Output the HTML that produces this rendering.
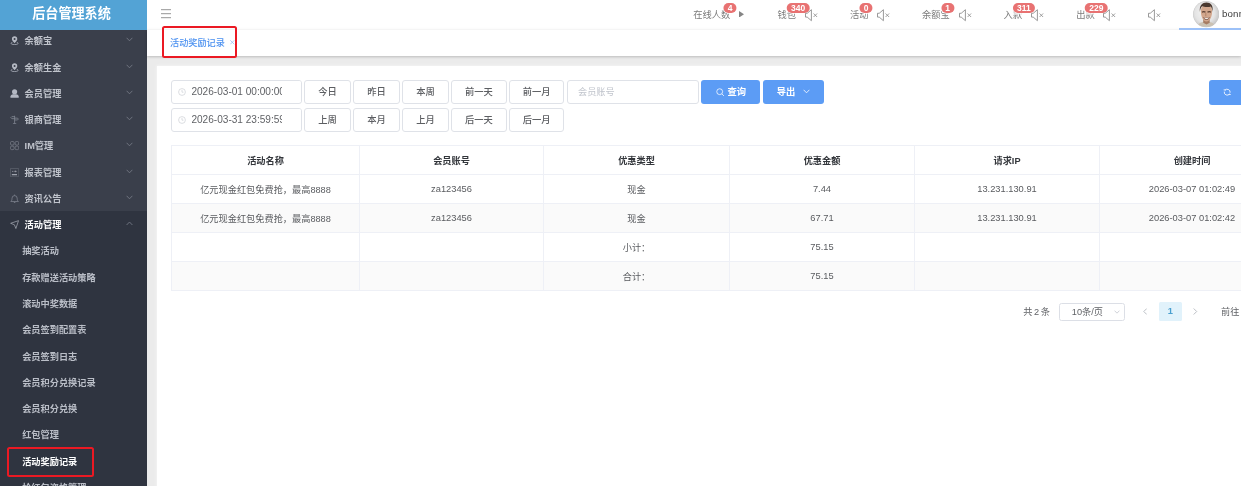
<!DOCTYPE html>
<html lang="zh-CN">
<head>
<meta charset="utf-8">
<title>后台管理系统</title>
<style>
*{box-sizing:border-box;margin:0;padding:0}
html,body{width:1241px;height:486px;overflow:hidden;background:#fff}
body{font-family:"Liberation Sans","Noto Sans CJK SC",sans-serif;font-size:9.3px;color:#606266;position:relative;-webkit-font-smoothing:antialiased}
#app{position:absolute;left:0;top:0;width:1241px;height:486px;overflow:hidden;will-change:transform}
.abs{position:absolute}
/* sidebar */
#side{position:absolute;left:0;top:0;width:147px;height:486px;background:#3a3f4b;overflow:hidden}
#logo{position:absolute;left:0;top:0;width:147px;height:29.5px;background:#53a3d5;color:#fff;font-weight:700;font-size:13.1px;text-align:center;line-height:27px;z-index:3;padding-right:4px}
#menu{position:absolute;left:0;top:27.15px;width:147px}
.mi{height:26.29px;line-height:27.2px;padding-top:1.1px;position:relative;color:#c0c4cc;font-weight:700;font-size:9.2px;padding-left:24.6px;white-space:nowrap}
.mi svg.ic{position:absolute;left:9.5px;top:9.1px;width:9.2px;height:9.2px}
.mi svg.ar{position:absolute;left:125.8px;top:10.2px;width:7px;height:5px}
.mi.open{background:#2f3440;color:#fff}
.sub{background:#2f3440}
.si{height:26.29px;line-height:27.2px;padding-top:1.1px;color:#babec7;font-weight:700;font-size:9.2px;padding-left:22.2px;white-space:nowrap}
.si.act{color:#fff}
/* header */
#hdr{position:absolute;left:147px;top:0;width:1094px;height:30px;background:#fff}
.ht{position:absolute;top:8.5px;line-height:13px;font-size:9.3px;color:#7c7c7c;white-space:nowrap}
.bd{position:absolute;top:3.2px;height:9.9px;line-height:10.9px;border-radius:6px;background:#e87272;box-shadow:0 0 0 0.7px #fff;color:#fff;font-size:8.5px;font-weight:700;text-align:center;padding:0 4.2px;min-width:12.4px;transform:translateX(-50%)}
.spk{position:absolute;top:9.2px;width:13px;height:12.4px}
/* tabs */
#tabs{position:absolute;left:147px;top:29.5px;width:1094px;height:26.5px;background:#fff;box-shadow:0 1px 2.5px rgba(0,0,0,.2),0 -1px 3px rgba(0,0,0,.035);z-index:2}
#main{position:absolute;left:147px;top:55.5px;width:1094px;height:431px;background:#ebebeb}
#card{position:absolute;left:10px;top:10.2px;width:1100px;height:430px;background:#fff;box-shadow:0 0 3px 1.5px rgba(255,255,255,.55)}
.inp{position:absolute;height:24px;border:1px solid #dfe2e8;border-radius:3px;background:#fff;color:#606266;font-size:10.08px;line-height:22px;white-space:nowrap;overflow:hidden}
.btn{position:absolute;height:24px;border:1px solid #dfe2e8;border-radius:3px;background:#fff;color:#5c5e62;font-size:9.3px;font-weight:500;line-height:22px;text-align:center;white-space:nowrap}
.pbtn{position:absolute;height:24.3px;border-radius:3px;background:#5c9cf5;color:#fff;font-size:9.3px;font-weight:700;line-height:24.3px;text-align:center;white-space:nowrap}
table{position:absolute;left:171px;top:145px;border-collapse:separate;border-spacing:0;table-layout:fixed;width:1114px;border-left:1px solid #eef0f6;border-top:1px solid #eef0f6}
td,th{border-right:1px solid #eef0f6;border-bottom:1px solid #eef0f6;height:29px;line-height:14px;text-align:center;font-size:9.2px;color:#595b5f;font-weight:400;padding:1px 0 0 0;white-space:nowrap}
th{color:#33363b;font-weight:700}
tr.s td{background:#fafafa}
td.n{padding:0 0 1px 0;font-size:9.3px}
</style>
</head>
<body>
<div id="app">
<div id="side">
  <div id="logo">后台管理系统</div>
  <div id="menu">
    <div class="mi"><svg class="ic" viewBox="0 0 10 10"><path fill-rule="evenodd" d="M5 0.300a2.900 2.900 0 0 1 2.900 2.900c0 1.900-2.900 4.600-2.900 4.600S2.100 5.100 2.100 3.200A2.900 2.900 0 0 1 5 0.300zM5 2.100a1.100 1.100 0 1 0 0 2.200a1.100 1.100 0 0 0 0-2.200z" fill="#b6bac4"/><path d="M2.600 6.900C0.200 7.500 0.600 9.300 5 9.300s4.800-1.800 2.400-2.400" fill="none" stroke="#b6bac4" stroke-width="0.800"/></svg>余额宝<svg class="ar" viewBox="0 0 7 5"><path d="M0.600 0.800L3.500 3.800L6.400 0.800" fill="none" stroke="#777c88" stroke-width="0.850"/></svg></div>
    <div class="mi"><svg class="ic" viewBox="0 0 10 10"><path fill-rule="evenodd" d="M5 0.300a2.900 2.900 0 0 1 2.900 2.900c0 1.900-2.900 4.600-2.900 4.600S2.100 5.100 2.100 3.200A2.900 2.900 0 0 1 5 0.300zM5 2.100a1.100 1.100 0 1 0 0 2.200a1.100 1.100 0 0 0 0-2.200z" fill="#b6bac4"/><path d="M2.600 6.900C0.200 7.500 0.600 9.300 5 9.300s4.800-1.800 2.400-2.400" fill="none" stroke="#b6bac4" stroke-width="0.800"/></svg>余额生金<svg class="ar" viewBox="0 0 7 5"><path d="M0.600 0.800L3.500 3.800L6.400 0.800" fill="none" stroke="#777c88" stroke-width="0.850"/></svg></div>
    <div class="mi"><svg class="ic" viewBox="0 0 10 10"><circle cx="5" cy="3" r="2.800" fill="#b3b8c3"/><path d="M0.500 9.600V8.200c0-1.600 1.300-2.600 2.800-2.600h3.400c1.500 0 2.800 1 2.800 2.600v1.400z" fill="#b3b8c3"/></svg>会员管理<svg class="ar" viewBox="0 0 7 5"><path d="M0.600 0.800L3.500 3.800L6.400 0.800" fill="none" stroke="#777c88" stroke-width="0.850"/></svg></div>
    <div class="mi"><svg class="ic" viewBox="0 0 10 10"><path d="M5 0.800v8.400M3.200 9.400h3.600M5 1.800H2L0.900 2.900L2 4h3M5 3.400h3.200l1 1l-1 1H5" fill="none" stroke="#9297a3" stroke-width="0.700" stroke-linejoin="round"/></svg>银商管理<svg class="ar" viewBox="0 0 7 5"><path d="M0.600 0.800L3.500 3.800L6.400 0.800" fill="none" stroke="#777c88" stroke-width="0.850"/></svg></div>
    <div class="mi"><svg class="ic" viewBox="0 0 10 10"><g fill="none" stroke="#80858f" stroke-width="0.750"><rect x="0.600" y="0.600" width="3.800" height="3.800" rx="1.100"/><rect x="5.600" y="0.600" width="3.800" height="3.800" rx="1.100"/><rect x="0.600" y="5.600" width="3.800" height="3.800" rx="1.100"/><rect x="5.600" y="5.600" width="3.800" height="3.800" rx="1.100"/></g></svg>IM管理<svg class="ar" viewBox="0 0 7 5"><path d="M0.600 0.800L3.500 3.800L6.400 0.800" fill="none" stroke="#777c88" stroke-width="0.850"/></svg></div>
    <div class="mi"><svg class="ic" viewBox="0 0 10 10"><rect x="0.400" y="0.400" width="9.200" height="9.200" rx="0.600" fill="none" stroke="#6c717d" stroke-width="0.650"/><path d="M2 7.300h5.600" stroke="#b9bdc7" stroke-width="1.100"/><path d="M2.200 3.700h1.500M4.700 3.700h2.600M5.800 2.800v1.800" stroke="#a4a8b2" stroke-width="0.750"/></svg>报表管理<svg class="ar" viewBox="0 0 7 5"><path d="M0.600 0.800L3.500 3.800L6.400 0.800" fill="none" stroke="#777c88" stroke-width="0.850"/></svg></div>
    <div class="mi"><svg class="ic" viewBox="0 0 10 10"><path d="M0.900 8.200c1.100-1 1.300-2 1.300-3.600a2.800 2.800 0 0 1 5.600 0c0 1.600 0.200 2.600 1.300 3.600zM5 0.600v1.100M4.200 9.300h1.600" fill="none" stroke="#8d929e" stroke-width="0.700" stroke-linejoin="round"/></svg>资讯公告<svg class="ar" viewBox="0 0 7 5"><path d="M0.600 0.800L3.500 3.800L6.400 0.800" fill="none" stroke="#777c88" stroke-width="0.850"/></svg></div>
    <div class="mi open"><svg class="ic" viewBox="0 0 10 10"><path d="M0.700 3.600L9.300 0.700L6.400 9.300L4.800 5.200z" fill="none" stroke="#aeb2bb" stroke-width="0.750" stroke-linejoin="round"/></svg>活动管理<svg class="ar" viewBox="0 0 7 5"><path d="M0.600 4L3.500 1L6.400 4" fill="none" stroke="#777c88" stroke-width="0.850"/></svg></div>
    <div class="sub">
      <div class="si">抽奖活动</div>
      <div class="si">存款赠送活动策略</div>
      <div class="si">滚动中奖数据</div>
      <div class="si">会员签到配置表</div>
      <div class="si">会员签到日志</div>
      <div class="si">会员积分兑换记录</div>
      <div class="si">会员积分兑换</div>
      <div class="si">红包管理</div>
      <div class="si act">活动奖励记录</div>
      <div class="si">抢红包资格管理</div>
      <div class="si">红包记录</div>
    </div>
  </div>
  <div class="abs" style="left:7.1px;top:446.6px;width:87.1px;height:30.8px;border:2.6px solid #eb1923;border-radius:2.5px"></div>
</div>

<div id="hdr">
  <svg class="abs" style="left:14px;top:9.3px;width:10px;height:9.5px" viewBox="0 0 10 9.500"><path d="M0 0.700h10M0 4.700h10M0 8.700h10" stroke="#8a8a8a" stroke-width="0.9"/></svg>
  <div class="ht" style="left:546.2px">在线人数</div>
  <div class="bd" style="left:583.2px">4</div>
  <svg class="abs" style="left:592.3px;top:10.6px;width:5px;height:6.6px" viewBox="0 0 5 6.600"><path d="M0 0L5 3.300L0 6.600z" fill="#858585"/></svg>
  <div class="ht" style="left:630.5px">钱包</div>
  <div class="bd" style="left:651.2px">340</div>
  <svg class="spk" style="left:657.6px" viewBox="0 0 13 12.4"><path d="M0.500 4.300h1.700L6.400 0.700v11L2.200 8.100H0.500z" fill="none" stroke="#888" stroke-width="0.85" stroke-linejoin="round"/><path d="M8.600 4.500l3.500 3.500M12.100 4.500l-3.500 3.500" stroke="#888" stroke-width="0.8"/></svg>
  <div class="ht" style="left:703px">活动</div>
  <div class="bd" style="left:719px">0</div>
  <svg class="spk" style="left:730.2px" viewBox="0 0 13 12.4"><path d="M0.500 4.300h1.700L6.400 0.700v11L2.200 8.100H0.500z" fill="none" stroke="#888" stroke-width="0.85" stroke-linejoin="round"/><path d="M8.600 4.500l3.500 3.500M12.100 4.500l-3.500 3.500" stroke="#888" stroke-width="0.8"/></svg>
  <div class="ht" style="left:775px">余额宝</div>
  <div class="bd" style="left:800.5px">1</div>
  <svg class="spk" style="left:811.5px" viewBox="0 0 13 12.4"><path d="M0.500 4.300h1.700L6.400 0.700v11L2.200 8.100H0.500z" fill="none" stroke="#888" stroke-width="0.85" stroke-linejoin="round"/><path d="M8.600 4.500l3.500 3.500M12.100 4.500l-3.500 3.500" stroke="#888" stroke-width="0.8"/></svg>
  <div class="ht" style="left:856.6px">入款</div>
  <div class="bd" style="left:876.9px">311</div>
  <svg class="spk" style="left:883.6px" viewBox="0 0 13 12.4"><path d="M0.500 4.300h1.700L6.400 0.700v11L2.200 8.100H0.500z" fill="none" stroke="#888" stroke-width="0.85" stroke-linejoin="round"/><path d="M8.600 4.500l3.500 3.500M12.100 4.500l-3.500 3.500" stroke="#888" stroke-width="0.8"/></svg>
  <div class="ht" style="left:929.2px">出款</div>
  <div class="bd" style="left:949.3px">229</div>
  <svg class="spk" style="left:955.6px" viewBox="0 0 13 12.4"><path d="M0.500 4.300h1.700L6.400 0.700v11L2.200 8.100H0.500z" fill="none" stroke="#888" stroke-width="0.85" stroke-linejoin="round"/><path d="M8.600 4.500l3.500 3.500M12.100 4.500l-3.500 3.500" stroke="#888" stroke-width="0.8"/></svg>
  <svg class="spk" style="left:1000.7px" viewBox="0 0 13 12.4"><path d="M0.500 4.300h1.700L6.400 0.700v11L2.200 8.100H0.500z" fill="none" stroke="#888" stroke-width="0.85" stroke-linejoin="round"/><path d="M8.600 4.500l3.500 3.500M12.100 4.500l-3.500 3.500" stroke="#888" stroke-width="0.8"/></svg>
  <svg class="abs" style="left:1045.6px;top:1.35px;width:26.3px;height:26.3px" viewBox="0 0 26.3 26.3">
    <defs><clipPath id="av"><circle cx="13.15" cy="13.15" r="12.700"/></clipPath>
    <radialGradient id="avbg" cx="45%" cy="45%" r="62%"><stop offset="0" stop-color="#f6f6f6"/><stop offset="0.600" stop-color="#e4e4e4"/><stop offset="1" stop-color="#bcbcbc"/></radialGradient>
    <filter id="avbl" x="-10%" y="-10%" width="120%" height="120%"><feGaussianBlur stdDeviation="0.450"/></filter></defs>
    <circle cx="13.15" cy="13.15" r="13.100" fill="#c9c9c9"/>
    <g clip-path="url(#av)">
      <rect width="26.3" height="26.3" fill="url(#avbg)"/>
      <g filter="url(#avbl)">
      <path d="M4.500 26.300c0.300-3.400 2.600-4.600 5.600-5.200h6.400c3 0.600 5.300 1.800 5.600 5.200z" fill="#cbc2b3"/>
      <path d="M10.200 17.500h6.500v4.300l-3.200 1.700l-3.300-1.700z" fill="#a67c62"/>
      <path d="M7.900 10.500c0-4.600 2.400-6.400 5.600-6.400s5.600 1.800 5.600 6.400c0 2.200-0.400 4.400-1.200 6.200c-1 2.300-2.600 3.900-4.400 3.900s-3.400-1.600-4.400-3.900c-0.800-1.800-1.200-4-1.200-6.200z" fill="#d2a78d"/>
      <path d="M9 11.300c0.900-0.800 2.600-0.800 3.500 0M14.500 11.300c0.900-0.800 2.600-0.800 3.500 0" stroke="#5b4034" stroke-width="1.200" fill="none"/>
      <path d="M12.800 12v3.200" stroke="#b08468" stroke-width="1"/>
      <path d="M10.300 16c1.500 0.900 4.900 0.900 6.400 0c-0.400 2.200-1.800 3-3.200 3s-2.800-0.800-3.200-3z" fill="#7a5546"/>
      <path d="M11 16.600c1.400 0.600 3.600 0.600 5 0c-0.500 1.200-1.500 1.600-2.500 1.600s-2-0.400-2.500-1.600z" fill="#f3ebe6"/>
      <path d="M6.900 10.800c-0.800-6.500 2.500-9.300 6.600-9.300s7.100 2.800 6 9.300c-0.300-2.500-0.800-4.300-1.700-5.300c-1.300 0.700-6.300 0.900-8.700-0.200c-1.200 1.200-1.900 3-2.200 5.500z" fill="#4a382e"/>
      </g>
    </g>
  </svg>
  <div class="abs" style="left:1074.9px;top:7.2px;line-height:14px;font-size:9.7px;letter-spacing:0.2px;color:#3a3a3a;white-space:nowrap">bonr</div>
  <div class="abs" style="left:1032.1px;top:28.2px;width:62px;height:1.6px;background:#9cc1f8;z-index:3"></div>
</div>

<div id="tabs">
  <div class="abs" style="left:23px;top:6px;line-height:14px;color:#4a90f0;font-size:9.15px;font-weight:500;white-space:nowrap">活动奖励记录</div>
  <svg class="abs" style="left:83.2px;top:10.9px;width:4.6px;height:4.6px" viewBox="0 0 4.6 4.6"><path d="M0.3 0.3L4.3 4.3M4.3 0.3L0.3 4.3" stroke="#8db6f3" stroke-width="0.7"/></svg>
</div>
<div class="abs" style="left:162.2px;top:25.9px;width:74.7px;height:31.7px;border:2.6px solid #eb1923;border-radius:2.5px;z-index:5"></div>

<div id="main"><div id="card"></div></div>


<!-- filters -->
<div class="inp" style="left:170.5px;top:79.5px;width:131.8px"><svg class="abs" style="left:6.2px;top:7px;width:8px;height:8px" viewBox="0 0 8 8"><circle cx="4" cy="4" r="3.4" fill="none" stroke="#cdd0d6" stroke-width="0.7"/><path d="M4 2v2.2h1.5" fill="none" stroke="#cdd0d6" stroke-width="0.7"/></svg><span class="abs" style="left:19.9px;top:0">2026-03-01 00:00:00</span><span class="abs" style="left:110.7px;top:0;width:19px;height:21px;background:#fff"></span></div>
<div class="inp" style="left:170.5px;top:107.6px;width:131.8px"><svg class="abs" style="left:6.2px;top:7px;width:8px;height:8px" viewBox="0 0 8 8"><circle cx="4" cy="4" r="3.4" fill="none" stroke="#cdd0d6" stroke-width="0.7"/><path d="M4 2v2.2h1.5" fill="none" stroke="#cdd0d6" stroke-width="0.7"/></svg><span class="abs" style="left:19.9px;top:0">2026-03-31 23:59:59</span><span class="abs" style="left:110.7px;top:0;width:19px;height:21px;background:#fff"></span></div>
<div class="btn" style="left:304.1px;top:79.5px;width:46.8px">今日</div>
<div class="btn" style="left:353.1px;top:79.5px;width:46.8px">昨日</div>
<div class="btn" style="left:402.1px;top:79.5px;width:46.8px">本周</div>
<div class="btn" style="left:451.1px;top:79.5px;width:55.6px">前一天</div>
<div class="btn" style="left:508.9px;top:79.5px;width:55.6px">前一月</div>
<div class="btn" style="left:304.1px;top:107.6px;width:46.8px">上周</div>
<div class="btn" style="left:353.1px;top:107.6px;width:46.8px">本月</div>
<div class="btn" style="left:402.1px;top:107.6px;width:46.8px">上月</div>
<div class="btn" style="left:451.1px;top:107.6px;width:55.6px">后一天</div>
<div class="btn" style="left:508.9px;top:107.6px;width:55.6px">后一月</div>
<div class="inp" style="left:567.1px;top:79.5px;width:131.6px;color:#c0c4cc;padding-left:9.9px;font-size:9.2px">会员账号</div>
<div class="pbtn" style="left:701.1px;top:79.5px;width:59px"><svg style="width:8.5px;height:8.5px;vertical-align:-1.5px;margin-right:3.4px;margin-left:0.6px" viewBox="0 0 9 9"><circle cx="3.9" cy="3.9" r="3.1" fill="none" stroke="#fff" stroke-width="0.8"/><path d="M6.2 6.2L8.4 8.4" stroke="#fff" stroke-width="0.8"/></svg>查询</div>
<div class="pbtn" style="left:762.5px;top:79.5px;width:61.4px">导出<svg style="width:7px;height:5px;margin-left:7.5px;vertical-align:0.5px" viewBox="0 0 7 5"><path d="M0.6 0.8L3.5 3.8L6.4 0.8" fill="none" stroke="#fff" stroke-width="0.8"/></svg></div>
<div class="pbtn" style="left:1208.6px;top:80.4px;width:40px;height:24.6px"><svg class="abs" style="left:14.4px;top:7.8px;width:8.4px;height:8.4px" viewBox="0 0 10 10"><path d="M2.13 2.99A3.5 3.5 0 0 1 8.45 5.61M7.87 7.01A3.5 3.5 0 0 1 1.55 4.39" fill="none" stroke="#fff" stroke-width="1"/><path d="M0.73 1.69h2.600v0.900h-2.600zM6.67 7.41h2.600v0.900h-2.600z" fill="#fff"/></svg></div>

<table>
<colgroup><col style="width:188px"><col style="width:184px"><col style="width:186px"><col style="width:185px"><col style="width:185px"><col style="width:185px"></colgroup>
<tr><th>活动名称</th><th>会员账号</th><th>优惠类型</th><th>优惠金额</th><th>请求IP</th><th>创建时间</th></tr>
<tr><td>亿元现金红包免费抢，最高8888</td><td class="n">za123456</td><td>现金</td><td class="n">7.44</td><td class="n">13.231.130.91</td><td class="n">2026-03-07 01:02:49</td></tr>
<tr class="s"><td>亿元现金红包免费抢，最高8888</td><td class="n">za123456</td><td>现金</td><td class="n">67.71</td><td class="n">13.231.130.91</td><td class="n">2026-03-07 01:02:42</td></tr>
<tr><td></td><td></td><td>小计：</td><td class="n">75.15</td><td></td><td></td></tr>
<tr class="s"><td></td><td></td><td>合计：</td><td class="n">75.15</td><td></td><td></td></tr>
</table>

<!-- pagination -->
<div class="abs" style="left:1023.2px;top:304.6px;line-height:14px;font-size:9.2px;word-spacing:-0.9px;color:#606266;white-space:nowrap">共 2 条</div>
<div class="abs" style="left:1059.4px;top:302.9px;width:66px;height:17.7px;border:1px solid #dcdfe6;border-radius:2.5px;font-size:9.2px;line-height:16.4px;color:#606266;padding-left:11.4px;white-space:nowrap">10条/页<svg class="abs" style="left:53.5px;top:6.2px;width:6px;height:4.2px" viewBox="0 0 7 5"><path d="M0.600 0.800L3.500 3.800L6.400 0.800" fill="none" stroke="#c0c4cc" stroke-width="0.900"/></svg></div>
<svg class="abs" style="left:1142.5px;top:308.2px;width:4.500px;height:7px" viewBox="0 0 4.500 7"><path d="M3.800 0.500L0.800 3.500L3.800 6.500" fill="none" stroke="#b4b8bf" stroke-width="0.900"/></svg>
<div class="abs" style="left:1158.9px;top:302.1px;width:22.7px;height:18.6px;background:#e1f2fb;color:#4a9fcf;font-weight:700;font-size:9.3px;line-height:18.6px;text-align:center;border-radius:1.5px">1</div>
<svg class="abs" style="left:1193.2px;top:308.2px;width:4.500px;height:7px" viewBox="0 0 4.500 7"><path d="M0.700 0.500L3.700 3.500L0.700 6.500" fill="none" stroke="#b4b8bf" stroke-width="0.900"/></svg>
<div class="abs" style="left:1221px;top:304.6px;line-height:14px;font-size:9.2px;color:#606266;white-space:nowrap">前往</div>

</div>
</body>
</html>
